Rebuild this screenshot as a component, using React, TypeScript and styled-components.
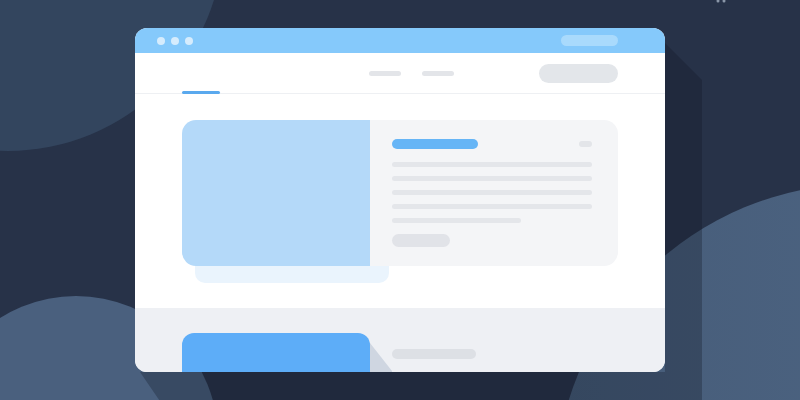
import React from "react";
import styled, { createGlobalStyle } from "styled-components";

const Global = createGlobalStyle`
  * { box-sizing: border-box; }
  body {
    margin: 0;
    background: #273248;
    font-family: "Inter", "Liberation Sans", sans-serif;
  }
`;

const Stage = styled.div`
  position: relative;
  width: 800px;
  height: 400px;
  overflow: hidden;
  background: #273248;
  padding: 28px 0 0 135px;
`;

const Backdrop = styled.svg`
  position: absolute;
  inset: 0;
  width: 800px;
  height: 400px;
`;

const Window = styled.div`
  position: relative;
  z-index: 1;
  width: 530px;
  height: 344px;
  border-radius: 12px;
  overflow: hidden;
  background: #ffffff;
  display: flex;
  flex-direction: column;
`;

const TitleBar = styled.div`
  height: 25px;
  flex-shrink: 0;
  background: #85c9fb;
  display: flex;
  align-items: center;
  padding: 0 47px 0 22px;
  gap: 6px;
`;

const Dot = styled.span`
  width: 8px;
  height: 8px;
  border-radius: 50%;
  background: #d6ecfd;
`;

const AddressPill = styled.span`
  margin-left: auto;
  width: 57px;
  height: 11px;
  border-radius: 6px;
  background: #a9dafc;
`;

const Nav = styled.div`
  height: 41px;
  flex-shrink: 0;
  border-bottom: 1px solid #eef0f3;
  display: flex;
  align-items: center;
  padding: 0 47px;
`;

const ActiveTab = styled.span`
  align-self: flex-end;
  width: 38px;
  height: 3px;
  margin-bottom: -1px;
  border-radius: 2px;
  background: #5aa9ee;
`;

const Links = styled.div`
  display: flex;
  gap: 21px;
  margin-left: 149px;
`;

const LinkBar = styled.span`
  width: 32px;
  height: 5px;
  border-radius: 3px;
  background: #e3e5e9;
`;

const NavButton = styled.span`
  margin-left: auto;
  width: 79px;
  height: 19px;
  border-radius: 10px;
  background: #e3e6ea;
`;

const Hero = styled.section`
  height: 214px;
  flex-shrink: 0;
  padding: 26px 47px 0;
`;

const CardWrap = styled.div`
  position: relative;
  width: 436px;
  height: 146px;
`;

const CardShadow = styled.div`
  position: absolute;
  left: 13px;
  top: 120px;
  width: 194px;
  height: 43px;
  border-radius: 0 0 10px 10px;
  background: #eaf4fd;
`;

const Card = styled.div`
  position: relative;
  z-index: 1;
  height: 100%;
  border-radius: 14px;
  overflow: hidden;
  display: flex;
`;

const Media = styled.div<{ $tone: string }>`
  width: 188px;
  flex-shrink: 0;
  background: ${(p) => p.$tone};
`;

const Body = styled.div`
  flex: 1;
  background: #f4f5f7;
  padding: 19px 26px 0 22px;
  display: flex;
  flex-direction: column;
`;

const TitleRow = styled.div`
  display: flex;
  align-items: center;
  justify-content: space-between;
`;

const Pill = styled.span<{ $w: number; $h: number; $c: string }>`
  display: block;
  width: ${(p) => p.$w}px;
  height: ${(p) => p.$h}px;
  border-radius: ${(p) => p.$h / 2}px;
  background: ${(p) => p.$c};
`;

const Lines = styled.div`
  margin-top: 13px;
  display: flex;
  flex-direction: column;
  gap: 9px;
`;

const Line = styled.span<{ $w?: number }>`
  display: block;
  height: 5px;
  width: ${(p) => (p.$w ? `${p.$w}px` : "100%")};
  border-radius: 3px;
  background: #e4e6ea;
`;

const MoreButton = styled(Pill)`
  margin-top: 11px;
`;

const Feed = styled.section`
  flex: 1;
  background: #eef0f4;
  padding: 25px 47px 0;
  display: flex;
`;

const FeedCard = styled.div`
  position: relative;
  width: 188px;
  height: 60px;
  border-radius: 12px 12px 0 0;
  background: #5dadf8;

  &::after {
    content: "";
    position: absolute;
    left: 188px;
    top: 10px;
    width: 22px;
    height: 40px;
    background: #cfd6e1;
    clip-path: polygon(0 0, 100% 70%, 100% 100%, 0 100%);
  }
`;

const FeedText = styled.div`
  margin: 16px 0 0 22px;
`;

export default function App() {
  return (
    <>
      <Global />
      <Stage>
        <Backdrop viewBox="0 0 800 400">
          <defs>
            <linearGradient id="rb" x1="0" y1="0" x2="1" y2="0">
              <stop offset="0" stopColor="#465c79" />
              <stop offset="1" stopColor="#506886" />
            </linearGradient>
          </defs>
          <circle cx="8" cy="-65" r="216" fill="#33455e" />
          <circle cx="76" cy="438" r="142" fill="#4a607e" />
          <circle cx="862" cy="491" r="307" fill="url(#rb)" />
          <polygon
            points="660,38 702,80 702,410 166,410 140,372 665,372"
            fill="rgba(16,22,36,0.3)"
          />
          <circle cx="718" cy="1" r="1.5" fill="#8a96a8" />
          <circle cx="724" cy="1" r="1.5" fill="#8a96a8" />
        </Backdrop>
        <Window>
          <TitleBar>
            <Dot />
            <Dot />
            <Dot />
            <AddressPill />
          </TitleBar>
          <Nav>
            <ActiveTab />
            <Links>
              <LinkBar />
              <LinkBar />
            </Links>
            <NavButton />
          </Nav>
          <Hero>
            <CardWrap>
              <CardShadow />
              <Card>
                <Media $tone="#b4d9f9" />
                <Body>
                  <TitleRow>
                    <Pill $w={86} $h={10} $c="#66b5f6" />
                    <Pill $w={13} $h={6} $c="#e3e5e9" />
                  </TitleRow>
                  <Lines>
                    <Line />
                    <Line />
                    <Line />
                    <Line />
                    <Line $w={129} />
                  </Lines>
                  <MoreButton $w={58} $h={13} $c="#e1e3e8" />
                </Body>
              </Card>
            </CardWrap>
          </Hero>
          <Feed>
            <FeedCard />
            <FeedText>
              <Pill $w={84} $h={10} $c="#dde0e5" />
            </FeedText>
          </Feed>
        </Window>
      </Stage>
    </>
  );
}
